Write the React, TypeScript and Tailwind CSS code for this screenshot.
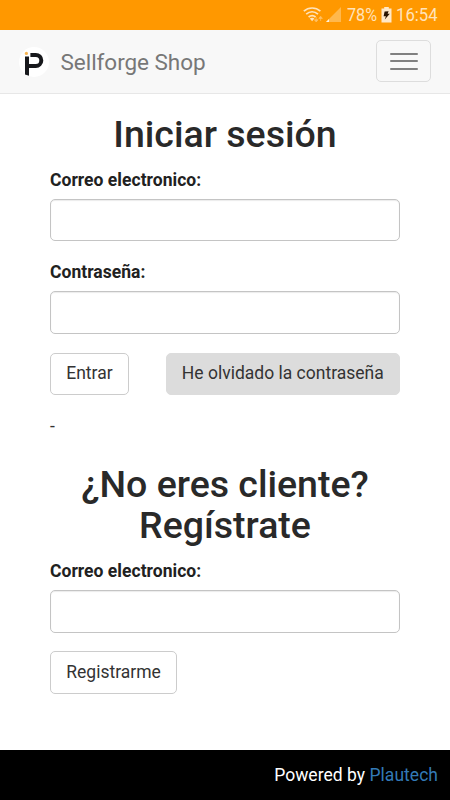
import React from 'react';
import clsx from 'clsx';

interface FieldProps {
  id: string;
  label: string;
  type: string;
}

const Field: React.FC<FieldProps> = ({ id, label, type }) => {
  return (
    <div className="mb-[18.75px]">
      <label htmlFor={id} className="block mb-[6.25px] font-bold text-[#212121] tracking-[0.03px]">
        {label}
      </label>
      <input
        id={id}
        type={type}
        className="block w-full h-[42.5px] px-[15px] rounded-[5px] border border-[#c4c4c4] bg-white shadow-[inset_0_1px_1px_rgba(0,0,0,0.08)] outline-none"
      />
    </div>
  );
};

interface ButtonProps {
  title: string;
  filled?: boolean;
}

const Button: React.FC<ButtonProps> = ({ title, filled }) => {
  return (
    <button
      className={clsx(
        'h-[42.5px] px-[15.25px] rounded-[5px] border text-[#333] whitespace-nowrap',
        filled ? 'bg-[#dcdcdc] border-[#dcdcdc]' : 'bg-white border-[#ccc]'
      )}
    >
      {title}
    </button>
  );
};

const Heading = ({ children }: { children: React.ReactNode }) => (
  <h2 className="mb-[12.5px] text-center text-[37.5px] leading-[41.25px] font-medium text-[#292929]">{children}</h2>
);

const StatusIcons = () => (
  <svg width="40" height="18" viewBox="0 0 40 18" fill="none" className="mr-1">
    {/* wifi */}
    <g stroke="#ffe3bb" strokeWidth="1.7">
      <path d="M0.8 5.2C5.6 0.9 12.6 0.9 17.4 5.2" />
      <path d="M3.2 8.2C6.8 5 11.4 5 15 8.2" />
      <path d="M5.6 11C8 9 10.2 9 12.6 11" />
    </g>
    <path d="M6.8 12.5C8.2 11.4 10 11.4 11.4 12.5L9.1 15.2Z" fill="#ffe3bb" />
    <path d="M11.4 13.8H15L13.2 16ZM13.2 11V14M15.8 12.4L17.6 10.2L19.4 12.4ZM17.6 12V15" fill="#ffc166" stroke="#ffc166" strokeWidth="0.7" />
    {/* signal */}
    <path d="M38 1V16H23Z" fill="#ffb84d" />
    <path d="M26 13V16H23Z" fill="#fff0db" />
  </svg>
);

const BatteryIcon = () => (
  <svg width="11" height="16" viewBox="0 0 11 16" className="ml-[2px] mr-1">
    <path d="M3.2 0H7.8V1.5H10.5V15.5H0.5V1.5H3.2Z" fill="#ffe8c8" />
    <path d="M3.6 4.6L7.6 4.2L6.6 6.8H8.8L3.8 12.6L4.9 9.2H2.6Z" fill="#2b1400" />
  </svg>
);

const Logo = () => (
  <svg width="30" height="30" viewBox="0 0 30 30">
    <circle cx="15" cy="15" r="15" fill="#fff" />
    <circle cx="7.4" cy="6.4" r="1.6" fill="#f9b550" />
    <path d="M6 9.6H10V28.8L6 27.6Z" fill="#17181c" />
    <path d="M11.4 7.9H16.8A5.5 5.5 0 0 1 16.8 18.9H9.6" fill="none" stroke="#17181c" strokeWidth="4" />
  </svg>
);

export default function App() {
  return (
    <div className="w-full h-[800px] flex flex-col bg-white font-[Roboto,sans-serif] text-[17.5px] leading-[25px] overflow-hidden">
      <div className="h-[30px] shrink-0 flex items-center justify-end pr-3 pb-px bg-[#ff9800] text-[#ffe3bb] text-[19px]">
        <StatusIcons />
        <span className="w-[32px] whitespace-nowrap">
          <span className="inline-block origin-left scale-x-[0.85]">78%</span>
        </span>
        <BatteryIcon />
        <span className="w-[42px] whitespace-nowrap">
          <span className="inline-block origin-left scale-x-[0.88]">16:54</span>
        </span>
      </div>

      <nav className="h-16 shrink-0 flex items-center justify-between pl-[19px] pr-[19px] bg-[#f8f8f8] border-b border-[#e7e7e7]">
        <div className="flex items-center gap-[11.5px] pt-[1.5px]">
          <Logo />
          <span className="text-[22.5px] text-[#777] tracking-[-0.04px]">Sellforge Shop</span>
        </div>
        <button className="w-[55px] h-[42px] mb-px flex flex-col items-center justify-center gap-[5.5px] rounded-[5px] border border-[#ddd]">
          <span className="w-7 h-[2px] rounded-[1px] bg-[#808080]" />
          <span className="w-7 h-[2px] rounded-[1px] bg-[#808080]" />
          <span className="w-7 h-[2px] rounded-[1px] bg-[#808080]" />
        </button>
      </nav>

      <main className="flex-1 px-[50px] pt-[19.75px]">
        <Heading>Iniciar sesión</Heading>
        <Field id="login-email" label="Correo electronico:" type="email" />
        <Field id="login-password" label="Contraseña:" type="password" />
        <div className="flex justify-between">
          <Button title="Entrar" />
          <Button title="He olvidado la contraseña" filled />
        </div>
        <p className="mt-[18.75px] mb-[25px] text-[#333]">-</p>

        <Heading>
          ¿No eres cliente?
          <br />
          Regístrate
        </Heading>
        <Field id="register-email" label="Correo electronico:" type="email" />
        <Button title="Registrarme" />
      </main>

      <footer className="h-[50px] shrink-0 flex items-center justify-end pr-3 bg-black text-white">
        <span className="tracking-[0.03px]">
          Powered by <a href="#" className="text-[#337ab7]">Plautech</a>
        </span>
      </footer>
    </div>
  );
}
